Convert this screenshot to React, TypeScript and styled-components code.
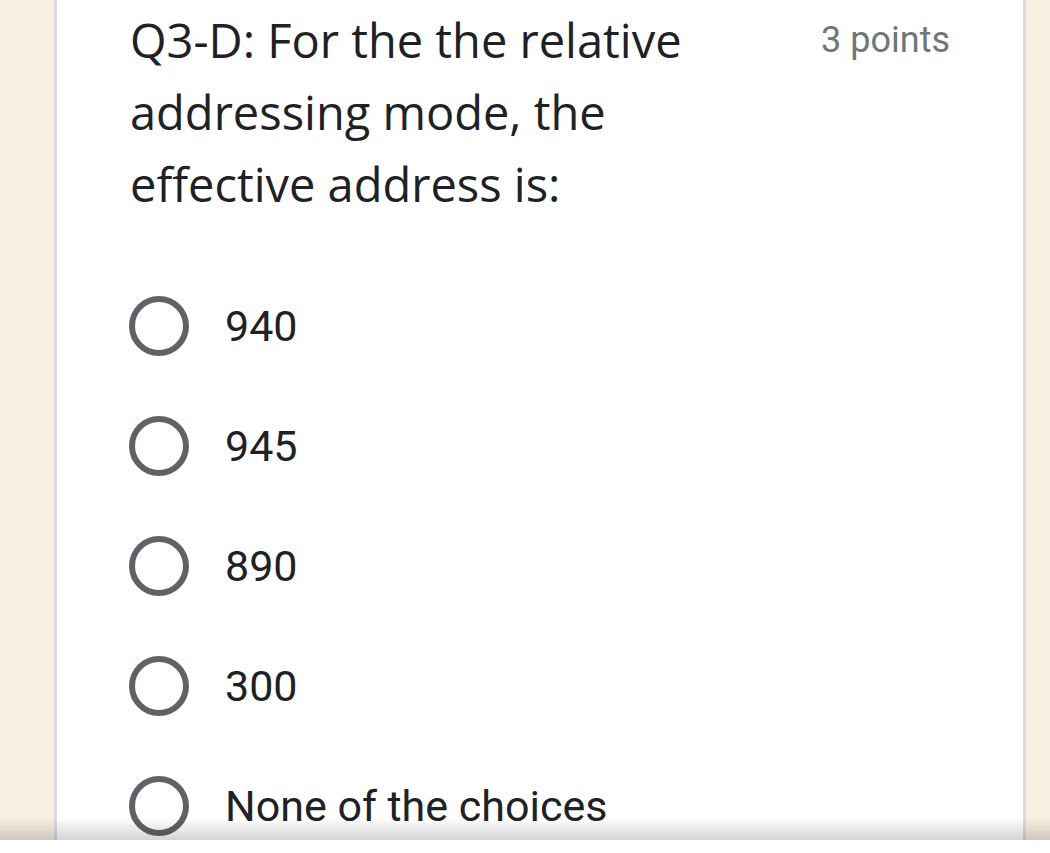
import React from 'react'
import styled, { createGlobalStyle } from 'styled-components';

const Global = createGlobalStyle`
    html, body {
        margin: 0;
        padding: 0;
        height: 853px;
        overflow: hidden;
        background: #f9f0e2;
    }
`;

const Page = styled.div`
    display: flex;
    height: 853px;
    padding-left: 54px;
    padding-right: 24px;
    box-sizing: border-box;
`;

const Card = styled.div`
    flex: 1;
    background: #ffffff;
    border-left: 3px solid #dadce0;
    border-right: 3px solid #dadce0;
    padding: 4px 73px 0 73px;
    box-sizing: border-box;
`;

const Header = styled.div`
    display: flex;
    justify-content: space-between;
    align-items: flex-start;
`;

const Title = styled.div`
    font-family: "Open Sans", Lato, sans-serif;
    font-size: 47px;
    line-height: 72px;
    color: #202124;
    width: 620px;
`;

const Points = styled.div`
    font-family: Roboto, sans-serif;
    font-size: 36px;
    line-height: 72px;
    color: #70757a;
`;

const Options = styled.div`
    display: flex;
    flex-direction: column;
    margin-top: 46px;
`;

const Option = styled.label`
    display: flex;
    align-items: center;
    gap: 36px;
    height: 120px;
    margin-left: -1px;
`;

const Radio = styled.span`
    width: 60px;
    height: 60px;
    box-sizing: border-box;
    border-radius: 50%;
    border: 6px solid #5f6368;
    flex-shrink: 0;
`;

const OptionText = styled.span`
    font-family: Roboto, sans-serif;
    font-size: 43px;
    color: #202124;
`;

const BottomBar = styled.div`
    position: fixed;
    left: 0;
    right: 0;
    bottom: 0;
    height: 13px;
    background: #ffffff;

    &::before {
        content: '';
        position: absolute;
        left: 0;
        right: 0;
        bottom: 13px;
        height: 22px;
        background: linear-gradient(to bottom, rgba(0, 0, 0, 0), rgba(0, 0, 0, 0.17));
    }
`;

const choices = ['940', '945', '890', '300', 'None of the choices'];

const App = () => {
    return (
        <>
            <Global />
            <Page>
                <Card>
                    <Header>
                        <Title>Q3-D: For the the relative addressing mode, the effective address is:</Title>
                        <Points>3 points</Points>
                    </Header>
                    <Options>
                        {choices.map((c) => (
                            <Option key={c}>
                                <Radio />
                                <OptionText>{c}</OptionText>
                            </Option>
                        ))}
                    </Options>
                </Card>
            </Page>
            <BottomBar />
        </>
    );
}

export default App
